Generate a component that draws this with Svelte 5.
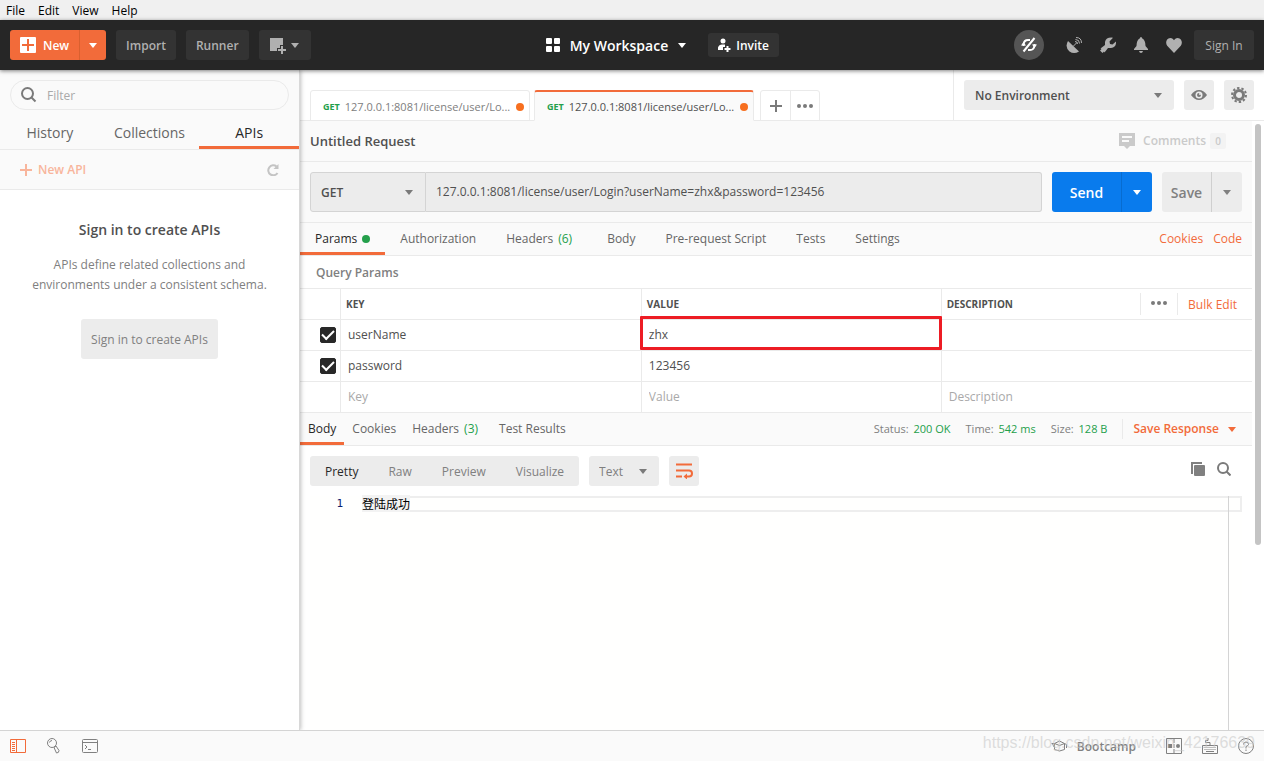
<script>
  let sideTab = $state('APIs');
  let requestTab = $state('Params');
  let responseTab = $state('Body');
  let viewMode = $state('Pretty');
  let activeRequest = $state(1);
  let url = $state('127.0.0.1:8081/license/user/Login?userName=zhx&password=123456');

  const menus = ['File', 'Edit', 'View', 'Help'];
  const sideTabs = ['History', 'Collections', 'APIs'];
  const openRequests = [
    { method: 'GET', name: '127.0.0.1:8081/license/user/Lo...' },
    { method: 'GET', name: '127.0.0.1:8081/license/user/Lo...' },
  ];
  const requestTabs = [
    { name: 'Params', dot: true },
    { name: 'Authorization' },
    { name: 'Headers', count: 6 },
    { name: 'Body' },
    { name: 'Pre-request Script' },
    { name: 'Tests' },
    { name: 'Settings' },
  ];
  const responseTabs = [
    { name: 'Body' },
    { name: 'Cookies' },
    { name: 'Headers', count: 3 },
    { name: 'Test Results' },
  ];
  const stats = [
    { label: 'Status:', value: '200 OK' },
    { label: 'Time:', value: '542 ms' },
    { label: 'Size:', value: '128 B' },
  ];
  const viewModes = ['Pretty', 'Raw', 'Preview', 'Visualize'];

  let params = $state([
    { enabled: true, key: 'userName', value: 'zhx', marked: true },
    { enabled: true, key: 'password', value: '123456', marked: false },
  ]);
</script>

{#snippet arrow()}
  <svg class="arrow" width="8" height="5" viewBox="0 0 8 5"><path d="M0 0h8L4 5z" fill="currentColor" /></svg>
{/snippet}

{#snippet dots()}
  <svg width="16" height="4" viewBox="0 0 16 4" fill="currentColor">
    <circle cx="2" cy="2" r="2" /><circle cx="8" cy="2" r="2" /><circle cx="14" cy="2" r="2" />
  </svg>
{/snippet}

<div class="app">
  <nav class="menubar">
    {#each menus as menu}
      <button type="button">{menu}</button>
    {/each}
  </nav>

  <header class="header">
    <div class="header-group">
      <div class="split new">
        <button type="button" class="new-main">
          <svg width="16" height="16" viewBox="0 0 16 16">
            <rect width="16" height="16" rx="1" fill="#fff" />
            <path d="M8 2v12M2 8h12" stroke="#f26b3a" stroke-width="2" />
          </svg>
          <span class="label">New</span>
        </button>
        <button type="button" class="new-more" aria-label="More">{@render arrow()}</button>
      </div>
      <button type="button" class="dark"><span class="label">Import</span></button>
      <button type="button" class="dark"><span class="label">Runner</span></button>
      <button type="button" class="dark window" aria-label="New window">
        <svg width="17" height="17" viewBox="0 0 17 17">
          <path d="M0 1h13v7h-3v3H7v3H0z" fill="#b0b0b0" />
          <path d="M12 9v8M8 13h8" stroke="#b0b0b0" stroke-width="2" />
        </svg>
        {@render arrow()}
      </button>
    </div>

    <div class="header-group workspace-group">
      <button type="button" class="workspace">
        <svg width="14" height="14" viewBox="0 0 14 14" fill="#fff">
          <rect width="6" height="6" rx="1" /><rect x="8" width="6" height="6" rx="1" />
          <rect y="8" width="6" height="6" rx="1" /><rect x="8" y="8" width="6" height="6" rx="1" />
        </svg>
        <span class="label">My Workspace</span>
        {@render arrow()}
      </button>
      <button type="button" class="dark invite">
        <svg width="13" height="14" viewBox="0 0 13 14" fill="#fff">
          <circle cx="5" cy="3" r="2.5" />
          <path d="M0 12V9.500Q1 6.500 4 6.500H7V9H5V12z" />
          <path d="M9.500 8v6M6.500 11h6" stroke="#fff" stroke-width="2" />
        </svg>
        <span class="label">Invite</span>
      </button>
    </div>

    <div class="header-group tools">
      <button type="button" class="sync" aria-label="Sync off">
        <svg width="16" height="16" viewBox="0 0 16 16" fill="none" stroke="#fff" stroke-width="2">
          <path d="M2.500 9V7.500Q3 3 7 3H9M13.500 7v1.500Q13 13 9 13H7M2.500 14.500 13.500 1" />
          <path d="M0 8.500h5L2.500 5zM11 7.500h5L13.500 11z" fill="#fff" stroke="none" />
        </svg>
      </button>
      <button type="button" class="tool" aria-label="Capture">
        <svg width="16" height="16" viewBox="0 0 16 16">
          <path d="M2 4 13 14.500Q8 17.500 3.500 14.500-1.500 10 2 4z" fill="#b0b0b0" />
          <path d="M7 9.500 11 5.500M9 4.500Q11.500 4.500 11.500 7M9.500 2.500Q13.500 2.500 13.500 6.500M10 .5Q15.500.5 15.500 6" fill="none" stroke="#b0b0b0" />
        </svg>
      </button>
      <button type="button" class="tool" aria-label="Settings">
        <svg width="16" height="16" viewBox="0 0 16 16">
          <path d="M13 .7 9.500 4.500 10 7l2.500.5L16 4.500Q16.500 10.500 11 11H8L4.500 15.500 4 14.500 2.500 16 0 13.500 1.500 12 .5 11.500 5 8V5Q6 0 13 .7z" fill="#b0b0b0" />
        </svg>
      </button>
      <button type="button" class="tool" aria-label="Notifications">
        <svg width="14" height="16" viewBox="0 0 14 16" fill="#b0b0b0">
          <path d="M7 0q1 0 1.300 1.500Q11.500 3 11.500 9L14 12v1H0v-1L2.500 9Q2.500 3 5.700 1.500 6 0 7 0z" />
          <path d="M5 14h4q-.5 2-2 2t-2-2z" />
        </svg>
      </button>
      <button type="button" class="tool" aria-label="Favorites">
        <svg width="16" height="15" viewBox="0 0 16 15">
          <path d="M8 15 1.200 7.800C-.8 5.300 0 0 4.300 0 6.200 0 7.300 1 8 2.300 8.700 1 9.800 0 11.700 0 16 0 16.800 5.300 14.800 7.800z" fill="#b0b0b0" />
        </svg>
      </button>
      <button type="button" class="dark sign-in"><span class="label">Sign In</span></button>
    </div>
  </header>

  <div class="body">
    <aside class="sidebar">
      <div class="filter-wrap">
        <label class="filter">
          <svg width="16" height="16" viewBox="0 0 16 16" fill="none" stroke="#7a7a7a" stroke-width="2">
            <circle cx="6.500" cy="6.500" r="5.500" /><path d="m10.500 10.500 4 4" />
          </svg>
          <input type="text" placeholder="Filter" aria-label="Filter" />
        </label>
      </div>
      <div class="side-tabs">
        {#each sideTabs as tab}
          <button type="button" class:active={tab === sideTab} onclick={() => (sideTab = tab)}>{tab}</button>
        {/each}
      </div>
      <div class="side-actions">
        <button type="button" class="new-api">
          <svg width="12" height="12" viewBox="0 0 12 12"><path d="M6 0v12M0 6h12" stroke="currentColor" stroke-width="2" /></svg>
          New API
        </button>
        <button type="button" aria-label="Refresh">
          <svg width="12" height="12" viewBox="0 0 12 12">
            <path d="M9.500 2.500A5 5 0 1 0 10.500 9" fill="none" stroke="#c4c4c4" stroke-width="2" />
            <path d="M11.500 0v5h-5z" fill="#c4c4c4" />
          </svg>
        </button>
      </div>
      <div class="side-empty">
        <h2>Sign in to create APIs</h2>
        <p>APIs define related collections and environments under a consistent schema.</p>
        <button type="button"><span class="label">Sign in to create APIs</span></button>
      </div>
    </aside>

    <main class="main">
      <div class="topbar">
        <div class="request-tabs">
          {#each openRequests as req, i}
            <button type="button" class="request-tab" class:active={i === activeRequest} onclick={() => (activeRequest = i)}>
              <span class="method">{req.method}</span>
              <span class="tab-name">{req.name}</span>
              <span class="unsaved"></span>
            </button>
          {/each}
          <div class="tab-actions">
            <button type="button" aria-label="New tab">
              <svg width="12" height="12" viewBox="0 0 12 12"><path d="M6 0v12M0 6h12" stroke="currentColor" stroke-width="2" /></svg>
            </button>
            <button type="button" aria-label="Tab options">{@render dots()}</button>
          </div>
        </div>
        <div class="environment">
          <div class="select env-select">
            <select aria-label="Environment"><option>No Environment</option></select>
            {@render arrow()}
          </div>
          <button type="button" aria-label="Environment quick look">
            <svg width="16" height="10" viewBox="0 0 16 10">
              <path d="M0 5Q3.500 0 8 0t8 5q-3.500 5-8 5T0 5z" fill="#7a7a7a" />
              <circle cx="8" cy="5" r="3.500" fill="#ececec" /><circle cx="8" cy="5" r="2" fill="#7a7a7a" /><circle cx="9" cy="4" r="1" fill="#ececec" />
            </svg>
          </button>
          <button type="button" aria-label="Manage environments">
            <svg width="16" height="16" viewBox="0 0 16 16" fill="none" stroke="#7a7a7a">
              <circle cx="8" cy="8" r="4.500" stroke-width="3" />
              <circle cx="8" cy="8" r="7" stroke-width="2" stroke-dasharray="2.400 2" />
            </svg>
          </button>
        </div>
      </div>

      <div class="workarea">
        <div class="content">
          <div class="title-row">
            <h1>Untitled Request</h1>
            <button type="button" class="comments">
              <svg width="16" height="16" viewBox="0 0 16 16">
                <path d="M0 0h16v13h-5l-3 3-3-3H0z" fill="#cacaca" /><path d="M3 4h10M3 8h7" stroke="#fafafa" stroke-width="2" />
              </svg>
              Comments <span>0</span>
            </button>
          </div>

          <div class="url-row">
            <div class="select method-select">
              <select aria-label="Method"><option>GET</option></select>
              {@render arrow()}
            </div>
            <input type="text" class="url" aria-label="Request URL" bind:value={url} />
            <div class="split send">
              <button type="button" class="main-part"><span class="label">Send</span></button>
              <button type="button" class="more-part" aria-label="Send options">{@render arrow()}</button>
            </div>
            <div class="split save">
              <button type="button" class="main-part"><span class="label">Save</span></button>
              <button type="button" class="more-part" aria-label="Save options">{@render arrow()}</button>
            </div>
          </div>

          <div class="tabs request">
            {#each requestTabs as tab}
              <button type="button" class:active={tab.name === requestTab} onclick={() => (requestTab = tab.name)}>
                {tab.name}{#if tab.dot}<i class="dot"></i>{/if}{#if tab.count}<span class="count">({tab.count})</span>{/if}
              </button>
            {/each}
            <div class="tab-links">
              <a href="#cookies">Cookies</a>
              <a href="#code">Code</a>
            </div>
          </div>

          <h3 class="section-title">Query Params</h3>
          <table class="params">
            <thead>
              <tr>
                <th class="check"></th>
                <th class="key">KEY</th>
                <th class="value">VALUE</th>
                <th>
                  <div class="desc-head">
                    <span>DESCRIPTION</span>
                    <button type="button" aria-label="Columns">{@render dots()}</button>
                    <a href="#bulk">Bulk Edit</a>
                  </div>
                </th>
              </tr>
            </thead>
            <tbody>
              {#each params as param}
                <tr>
                  <td class="check"><input type="checkbox" aria-label="Enable {param.key}" bind:checked={param.enabled} /></td>
                  <td><input type="text" aria-label="Key" bind:value={param.key} /></td>
                  <td class:marked={param.marked}><input type="text" aria-label="Value" bind:value={param.value} /></td>
                  <td><input type="text" aria-label="Description" /></td>
                </tr>
              {/each}
              <tr>
                <td></td>
                <td><input type="text" aria-label="Key" placeholder="Key" /></td>
                <td><input type="text" aria-label="Value" placeholder="Value" /></td>
                <td><input type="text" aria-label="Description" placeholder="Description" /></td>
              </tr>
            </tbody>
          </table>

          <div class="tabs response">
            {#each responseTabs as tab}
              <button type="button" class:active={tab.name === responseTab} onclick={() => (responseTab = tab.name)}>
                {tab.name}{#if tab.count}<span class="count">({tab.count})</span>{/if}
              </button>
            {/each}
            <div class="stats">
              {#each stats as stat}
                <span>{stat.label} <b>{stat.value}</b></span>
              {/each}
              <button type="button" class="save-response">Save Response {@render arrow()}</button>
            </div>
          </div>

          <div class="viewer-bar">
            <div class="modes">
              {#each viewModes as mode}
                <button type="button" class:active={mode === viewMode} onclick={() => (viewMode = mode)}><span class="label">{mode}</span></button>
              {/each}
            </div>
            <div class="select format-select">
              <select aria-label="Format"><option>Text</option></select>
              {@render arrow()}
            </div>
            <button type="button" class="wrap" aria-label="Wrap lines">
              <svg width="17" height="16" viewBox="0 0 17 16" fill="none" stroke="#f26b3a" stroke-width="2">
                <path d="M0 1.500h16M0 7.500h13q3 0 3 3t-3 3h-3M0 13.500h6" />
                <path d="M11 10.500v6L7.500 13.500z" fill="#f26b3a" stroke="none" />
              </svg>
            </button>
            <div class="viewer-tools">
              <button type="button" aria-label="Copy">
                <svg width="14" height="14" viewBox="0 0 14 14"><path d="M1 12V1H11" fill="none" stroke="#808080" stroke-width="2" /><rect x="3" y="3" width="11" height="11" rx="1" fill="#808080" /></svg>
              </button>
              <button type="button" aria-label="Search">
                <svg width="14" height="14" viewBox="0 0 14 14" fill="none" stroke="#7a7a7a" stroke-width="2">
                  <circle cx="6" cy="6" r="5" /><path d="m9.500 9.500 4 4" />
                </svg>
              </button>
            </div>
          </div>

          <div class="editor">
            <span class="line-number">1</span>
            <div class="code"><div class="line"><span>登陆成功</span></div></div>
            <div class="ruler"></div>
          </div>
        </div>
        <div class="scrollbar"><div class="thumb"></div></div>
      </div>
    </main>
  </div>

  <footer class="footer">
    <div class="foot-group">
      <button type="button" aria-label="Toggle sidebar">
        <svg width="16" height="14" viewBox="0 0 16 14" fill="none" stroke="#f26b3a">
          <path d="M.5.5h15v13H.5zM6.500.5v13M2 3.500h3M2 5.500h3M2 7.500h3M2 9.500h3M2 11.500h3" />
        </svg>
      </button>
      <button type="button" aria-label="Find">
        <svg width="16" height="16" viewBox="0 0 16 16" fill="none" stroke="#808080">
          <circle cx="6" cy="5" r="4.500" /><path d="M3.500 4.500Q4 2.500 6 2.500M8 9.500l2-1.500 3 4.500q0 2.500-2.500 2.500z" />
        </svg>
      </button>
      <button type="button" aria-label="Console">
        <svg width="16" height="14" viewBox="0 0 16 14" fill="none" stroke="#808080">
          <rect x=".5" y=".5" width="15" height="13" rx="1" /><path d="M.5 3.500h15M3 6l2 2-2 2M6 10.500h3" />
        </svg>
      </button>
    </div>
    <div class="foot-group right">
      <button type="button" class="bootcamp">
        <svg width="16" height="12" viewBox="0 0 16 12" fill="none" stroke="#808080">
          <path d="M3.500 3.500 8.500 1l5 2.500-5 2zM3.500 4v5.500q5 3 10 0V4M3.500 3.500H.5M1.500 3.500 3 7M13.500 3.500l2 1V8" />
        </svg>
        <span class="label">Bootcamp</span>
      </button>
      <button type="button" aria-label="Two pane view">
        <svg width="16" height="16" viewBox="0 0 16 16" fill="none" stroke="#808080">
          <path d="M.5.5h15v15H.5zM8 .5V5M8 11v4.500" /><path d="M2 6h4v4H2zM7.500 6h1v4h-1z" fill="#808080" stroke="none" /><circle cx="12" cy="8" r="2" fill="#808080" stroke="none" />
        </svg>
      </button>
      <button type="button" aria-label="Keyboard shortcuts">
        <svg width="16" height="16" viewBox="0 0 16 16" fill="none" stroke="#808080">
          <path d="M.5 7.500h15v8H.5zM8 7V4.500H3.500v-2H6V0" /><path d="M2.500 9.500h11M2.500 11.500h11" stroke-dasharray="1 1" /><path d="M4 13.500h8" />
        </svg>
      </button>
      <button type="button" aria-label="Help">
        <svg width="16" height="16" viewBox="0 0 16 16" fill="none" stroke="#808080">
          <circle cx="8" cy="8" r="7.500" /><path d="M5.500 6.500Q5.500 4 8 4t2.500 2.500Q10.500 7.500 8 8.500v2M8 11.500v1.500" />
        </svg>
      </button>
    </div>
    <span class="watermark">https://blog.csdn.net/weixin_42176639</span>
  </footer>
</div>

<style>
  :global(body) {
    margin: 0;
  }

  .app {
    display: flex;
    flex-direction: column;
    min-height: 100vh;
    font-family: 'Open Sans', sans-serif;
    font-size: 12px;
    line-height: 20px;
    color: #505050;
    background: #fff;
  }

  .app *,
  .app {
    box-sizing: border-box;
  }

  button,
  input,
  select {
    font: inherit;
    color: inherit;
    background: none;
    border: none;
    margin: 0;
    padding: 0;
    outline: none;
  }

  button {
    display: inline-flex;
    align-items: center;
    justify-content: center;
    white-space: nowrap;
    cursor: pointer;
  }

  a {
    color: #f26b3a;
    text-decoration: none;
  }

  svg {
    display: block;
    flex: none;
  }

  h1,
  h2,
  h3,
  p {
    margin: 0;
  }

  input::placeholder {
    color: #a9a9a9;
    opacity: 1;
  }

  .label {
    padding-top: 2px;
  }

  .menubar {
    display: flex;
    gap: 13px;
    height: 20px;
    padding: 2px 6px 0;
    background: #f0f0f0;
    color: #000;
  }

  .header {
    display: flex;
    align-items: center;
    justify-content: space-between;
    height: 50px;
    padding: 0 10px;
    background: #262626;
    box-shadow: 0 1px 4px rgba(0, 0, 0, 0.5);
    position: relative;
    z-index: 3;
  }

  .header-group {
    display: flex;
    align-items: center;
    gap: 10px;
  }

  .split {
    display: flex;
    border-radius: 3px;
    overflow: hidden;
  }

  .new {
    height: 30px;
    background: #f26b3a;
    color: #fff;
    font-weight: 600;
  }

  .new-main {
    gap: 7px;
    padding: 0 10px;
    border-right: 1px solid #d9602f;
  }

  .new-more {
    width: 26px;
  }

  .dark {
    height: 30px;
    padding: 0 10px;
    border-radius: 3px;
    background: #333;
    color: #b0b0b0;
    font-weight: 600;
  }

  .window {
    width: 52px;
    gap: 4px;
  }

  .workspace-group {
    gap: 22px;
  }

  .workspace {
    gap: 10px;
    color: #fff;
    font-size: 14px;
    font-weight: 600;
  }

  .invite {
    height: 24px;
    gap: 5px;
    color: #fff;
  }

  .tools {
    gap: 18px;
  }

  .sync {
    width: 30px;
    height: 30px;
    border-radius: 50%;
    background: #555;
    margin-right: 4px;
  }

  .sign-in {
    width: 60px;
    margin-left: -6px;
    font-weight: 400;
  }

  .body {
    display: flex;
    flex: 1;
  }

  .sidebar {
    width: 300px;
    flex: none;
    border-right: 1px solid #d8d8d8;
    box-shadow: 1px 0 4px rgba(0, 0, 0, 0.25);
    position: relative;
    z-index: 2;
    background: #fff;
  }

  .filter-wrap {
    padding: 10px 10px 6px;
    background: #fafafa;
  }

  .filter {
    display: flex;
    align-items: center;
    gap: 10px;
    height: 30px;
    padding: 0 10px;
    border: 1px solid #eaeaea;
    border-radius: 15px;
  }

  .filter input {
    flex: 1;
    min-width: 0;
    padding-top: 2px;
  }

  .side-tabs {
    display: grid;
    grid-template-columns: repeat(3, 1fr);
    height: 34px;
    border-bottom: 1px solid #eaeaea;
    background: #fafafa;
    color: #666;
    font-size: 14px;
  }

  .side-tabs button {
    border-bottom: 3px solid transparent;
    padding-top: 3px;
  }

  .side-tabs .active {
    color: #282828;
    border-color: #f26b3a;
  }

  .side-actions {
    display: flex;
    justify-content: space-between;
    height: 40px;
    padding: 0 20px;
    border-bottom: 1px solid #eaeaea;
    background: #fafafa;
  }

  .new-api {
    gap: 6px;
    color: #f8b59c;
    font-weight: 600;
  }

  .side-empty {
    padding: 30px 20px;
    text-align: center;
    color: #808080;
  }

  .side-empty h2 {
    color: #505050;
    font-size: 14px;
    font-weight: 600;
  }

  .side-empty p {
    padding: 15px 10px 24px;
  }

  .side-empty button {
    height: 40px;
    padding: 0 10px;
    border-radius: 3px;
    background: #ececec;
  }

  .main {
    display: flex;
    flex-direction: column;
    flex: 1;
    min-width: 0;
  }

  .topbar {
    display: flex;
    justify-content: space-between;
    height: 51px;
    border-bottom: 1px solid #eaeaea;
  }

  .request-tabs {
    display: flex;
    align-items: flex-end;
    gap: 4px;
    padding-left: 10px;
    margin-bottom: -1px;
  }

  .request-tab {
    justify-content: flex-start;
    width: 220px;
    height: 31px;
    padding: 2px 5px 0 12px;
    border: 1px solid #eaeaea;
    border-radius: 3px 3px 0 0;
    font-size: 11px;
    color: #808080;
  }

  .request-tab.active {
    padding-top: 1px;
    border-top: 2px solid #f26b3a;
    border-bottom-color: #fafafa;
    background: #fafafa;
    color: #505050;
  }

  .method {
    margin-right: 5px;
    color: #249f4b;
    font-size: 9px;
    font-weight: 700;
  }

  .tab-name {
    flex: 1;
    text-align: left;
  }

  .unsaved {
    width: 8px;
    height: 8px;
    border-radius: 50%;
    background: #f76f1f;
  }

  .tab-actions {
    display: flex;
    height: 31px;
    margin-left: 2px;
    border: 1px solid #eaeaea;
    border-radius: 3px 3px 0 0;
    color: #7a7a7a;
  }

  .tab-actions button {
    width: 29px;
  }

  .tab-actions button + button {
    border-left: 1px solid #eaeaea;
  }

  .environment {
    display: flex;
    gap: 10px;
    padding: 10px;
    border-left: 1px solid #eaeaea;
  }

  .environment button {
    width: 30px;
    height: 30px;
    border-radius: 3px;
    background: #ececec;
  }

  /* the arrow shares one grid cell with the native select */
  .select {
    display: grid;
    align-items: center;
    border-radius: 3px;
    background: #ececec;
  }

  .select select {
    grid-area: 1 / 1;
    height: 100%;
    padding: 2px 10px 0;
    appearance: none;
  }

  .select :global(.arrow) {
    grid-area: 1 / 1;
    justify-self: end;
    margin-right: 12px;
    color: #7a7a7a;
    pointer-events: none;
  }

  .env-select {
    width: 210px;
    height: 30px;
    font-weight: 600;
  }

  .env-select select {
    padding-left: 11px;
  }

  .workarea {
    display: flex;
    flex: 1;
  }

  .content {
    display: flex;
    flex-direction: column;
    flex: 1;
    min-width: 0;
  }

  .scrollbar {
    width: 12px;
    padding: 3px;
  }

  .thumb {
    width: 6px;
    height: 421px;
    border-radius: 3px;
    background: #c4c4c4;
  }

  .title-row {
    display: flex;
    align-items: center;
    justify-content: space-between;
    height: 41px;
    padding: 0 26px 0 10px;
    border-bottom: 1px solid #eaeaea;
    background: #fafafa;
  }

  .title-row h1 {
    font-size: 13px;
    font-weight: 600;
  }

  .comments {
    gap: 8px;
    color: #cacaca;
    font-weight: 600;
  }

  .comments span {
    width: 16px;
    margin-left: -4px;
    border-radius: 2px;
    background: #f3f3f3;
    font-size: 10px;
    line-height: 16px;
  }

  .url-row {
    display: flex;
    height: 61px;
    padding: 10px;
    border-bottom: 1px solid #eaeaea;
    background: #fafafa;
  }

  .method-select {
    width: 116px;
    border: 1px solid #d4d4d4;
    border-radius: 3px 0 0 3px;
    font-weight: 600;
  }

  .url {
    flex: 1;
    min-width: 0;
    padding: 0 10px;
    border: 1px solid #d4d4d4;
    border-left: none;
    border-radius: 0 3px 3px 0;
    background: #ececec;
  }

  .url-row .split {
    margin-left: 10px;
    font-size: 14px;
    font-weight: 600;
  }

  .send {
    width: 100px;
    background: #097bed;
    color: #fff;
  }

  .save {
    width: 80px;
    background: #ececec;
    color: #808080;
  }

  .main-part {
    flex: 1;
  }

  .more-part {
    width: 31px;
    border-left: 1px solid rgba(0, 0, 0, 0.12);
  }

  .tabs {
    display: flex;
    height: 33px;
    border-bottom: 1px solid #eaeaea;
    background: #fafafa;
    color: #666;
  }

  .tabs > button {
    padding: 3px 15px 0;
    border-bottom: 3px solid transparent;
  }

  .tabs.response > button {
    padding: 3px 8px 0;
  }

  .tabs > .active {
    border-color: #f26b3a;
    color: #282828;
  }

  .dot {
    width: 8px;
    height: 8px;
    margin-left: 5px;
    border-radius: 50%;
    background: #249f4b;
  }

  .count {
    margin: 0 5px;
    color: #249f4b;
  }

  .tab-links {
    display: flex;
    align-items: center;
    gap: 10px;
    margin-left: auto;
    padding-right: 10px;
  }

  .section-title {
    height: 33px;
    padding: 0 16px;
    font-size: 12px;
    font-weight: 600;
    line-height: 34px;
    color: #808080;
    border-bottom: 1px solid #eaeaea;
  }

  .params {
    width: 100%;
    border-collapse: separate;
    border-spacing: 0;
    table-layout: fixed;
  }

  .params th,
  .params td {
    height: 31px;
    padding: 0;
    border-bottom: 1px solid #eaeaea;
    border-right: 1px solid #eaeaea;
    text-align: left;
  }

  .params th:last-child,
  .params td:last-child {
    border-right: none;
  }

  .params th {
    padding-left: 5px;
    font-size: 10px;
    font-weight: 700;
  }

  .params .check {
    width: 41px;
    padding-left: 20px;
  }

  .key {
    width: 31.600%;
  }

  .value {
    width: 31.500%;
  }

  .params input[type='text'] {
    display: block;
    width: 100%;
    height: 30px;
    padding: 0 7px 2px;
  }

  .params input[type='checkbox'] {
    display: flex;
    align-items: center;
    justify-content: center;
    width: 16px;
    height: 16px;
    border: 1px solid #282828;
    border-radius: 2px;
    appearance: none;
  }

  .params input[type='checkbox']:checked {
    background: #282828;
  }

  .params input[type='checkbox']:checked::before {
    content: '';
    width: 10px;
    height: 5px;
    margin-bottom: 4px;
    border: solid #fff;
    border-width: 0 0 2px 2px;
    transform: rotate(-45deg);
  }

  .marked {
    position: relative;
  }

  .marked::after {
    content: '';
    position: absolute;
    inset: -4px -1px 0 -2px;
    border: 3px solid #ed1c24;
    border-radius: 1px;
    pointer-events: none;
  }

  .desc-head {
    display: flex;
    align-items: center;
    height: 30px;
    color: #505050;
  }

  .desc-head button {
    width: 38px;
    height: 22px;
    margin-left: auto;
    padding-bottom: 2px;
    border: solid #eaeaea;
    border-width: 0 1px;
    color: #7a7a7a;
  }

  .desc-head a {
    padding: 2px 15px 0 10px;
    font-size: 12px;
    font-weight: 400;
  }

  .stats {
    display: flex;
    align-items: center;
    gap: 15px;
    margin-left: auto;
    padding-right: 16px;
    color: #808080;
    font-size: 11px;
  }

  .stats b {
    margin-left: 2px;
    color: #249f4b;
    font-weight: 400;
  }

  .save-response {
    gap: 9px;
    padding-left: 10px;
    border-left: 1px solid #eaeaea;
    color: #f26b3a;
    font-size: 12px;
    font-weight: 600;
  }

  .viewer-bar {
    display: flex;
    gap: 10px;
    padding: 10px;
  }

  .modes {
    display: flex;
    height: 30px;
    border-radius: 3px;
    background: #ececec;
    color: #808080;
  }

  .modes button {
    padding: 0 15px;
  }

  .modes .active {
    color: #282828;
  }

  .format-select {
    width: 70px;
    color: #808080;
  }

  .wrap {
    width: 30px;
    height: 30px;
    border-radius: 3px;
    background: #ececec;
  }

  .viewer-tools {
    display: flex;
    align-items: center;
    gap: 12px;
    margin: 0 11px 4px auto;
  }

  .editor {
    display: flex;
    flex: 1;
    margin: 0 10px;
    background: #fffffe;
    color: #000;
  }

  .line-number {
    width: 52px;
    padding-right: 19px;
    color: #0b216f;
    font: 11px/16px 'DejaVu Sans Mono', monospace;
    text-align: right;
  }

  .code {
    flex: 1;
  }

  .line {
    height: 16px;
    margin-right: -14px;
    border: 2px solid #eee;
    border-left: none;
    font: 12px/12px 'Noto Sans CJK SC', sans-serif;
  }

  .line span {
    background: #f3f3f3;
  }

  .ruler {
    width: 14px;
    border-left: 1px solid #d4d4d4;
  }

  .footer {
    display: flex;
    align-items: center;
    justify-content: space-between;
    height: 31px;
    padding: 0 10px;
    border-top: 1px solid #d4d4d4;
    background: #fafafa;
    position: relative;
    z-index: 3;
  }

  .foot-group {
    display: flex;
    align-items: center;
    gap: 20px;
  }

  .bootcamp {
    gap: 10px;
    margin-right: 10px;
    color: #808080;
    font-weight: 600;
  }

  .watermark {
    position: absolute;
    right: 9px;
    bottom: 8px;
    color: rgba(200, 200, 200, 0.6);
    font: 16px/20px 'Liberation Sans', sans-serif;
    pointer-events: none;
  }
</style>
